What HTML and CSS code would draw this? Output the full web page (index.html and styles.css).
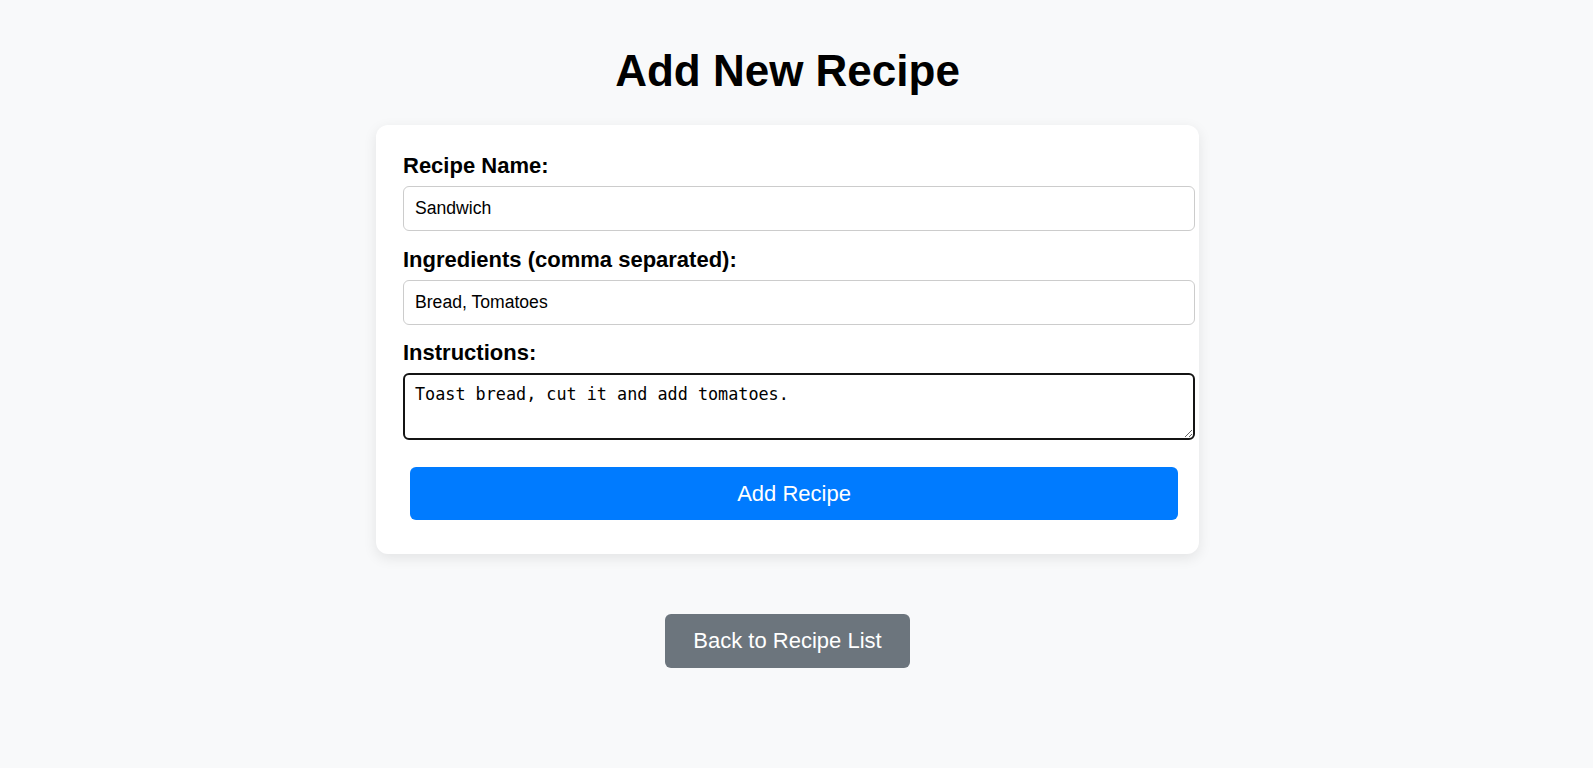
FILE: index.html
```html
<!DOCTYPE html>
<html lang="en">
<head>
<meta charset="utf-8">
<title>Add New Recipe</title>
<link rel="stylesheet" href="styles.css">
</head>
<body>
<main class="page">
  <h1 class="title">Add New Recipe</h1>
  <form class="card">
    <label class="field-label" for="name">Recipe Name:</label>
    <input class="field" id="name" type="text" value="Sandwich">
    <label class="field-label" for="ingredients">Ingredients (comma separated):</label>
    <input class="field" id="ingredients" type="text" value="Bread, Tomatoes">
    <label class="field-label" for="instructions">Instructions:</label>
    <textarea class="field area" id="instructions">Toast bread, cut it and add tomatoes.</textarea>
    <button class="btn-primary" type="button">Add Recipe</button>
  </form>
  <a class="btn-back" href="#">Back to Recipe List</a>
</main>
</body>
</html>
```

FILE: styles.css
```css
html, body {
  margin: 0;
}
body {
  background: #f8f9fa;
  font-family: "Liberation Sans", Arial, sans-serif;
  color: #000;
  padding: 46px 18px 0 0;
}
.page {
  display: flex;
  flex-direction: column;
  align-items: center;
}
.title {
  font-size: 44px;
  font-weight: bold;
  line-height: normal;
  margin: 0 0 29px;
}
.card {
  width: 823px;
  box-sizing: border-box;
  padding: 28px 28px 34px 27px;
  background: #fff;
  border-radius: 12px;
  box-shadow: 0 4px 14px rgba(0, 0, 0, 0.09);
}
.field-label {
  display: block;
  font-size: 22px;
  font-weight: bold;
  line-height: normal;
  margin-bottom: 7px;
}
.field {
  display: block;
  width: 100%;
  box-sizing: content-box;
  margin: 0 0 15.5px;
  padding: 11px;
  border: 1px solid #ccc;
  border-radius: 6px;
  font-family: "Liberation Sans", Arial, sans-serif;
  font-size: 17.6px;
  line-height: 21px;
  color: #000;
  background: #fff;
}
.area {
  box-sizing: border-box;
  width: calc(100% + 24px);
  height: 67px;
  margin: 0;
  padding: 10px;
  border: 2px solid #141414;
  font-family: "DejaVu Sans Mono", monospace;
  font-size: 16.8px;
  line-height: 19.4px;
  resize: vertical;
}
.btn-primary {
  display: block;
  width: 768px;
  margin: 27px 0 0 7px;
  padding: 13.7px 0;
  border: 0;
  border-radius: 6px;
  background: #007bff;
  color: #fff;
  font-family: "Liberation Sans", Arial, sans-serif;
  font-size: 22px;
  line-height: normal;
}
.btn-back {
  display: block;
  margin-top: 60px;
  padding: 14px 28px;
  border-radius: 6px;
  background: #6c757d;
  color: #fff;
  font-size: 22px;
  line-height: normal;
  text-decoration: none;
}
```
